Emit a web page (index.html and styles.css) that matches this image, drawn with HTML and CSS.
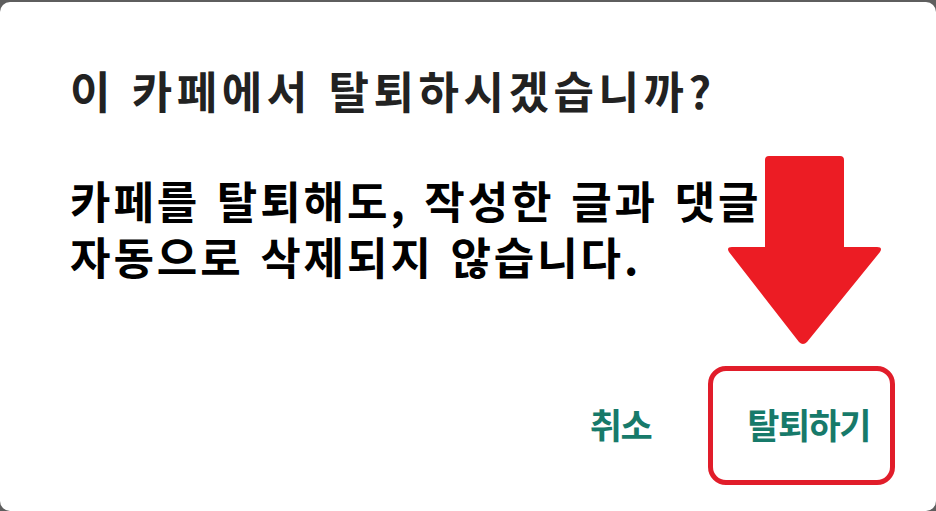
FILE: index.html
```html
<!DOCTYPE html>
<html lang="ko">
<head>
    <meta charset="UTF-8">
    <meta name="viewport" content="width=device-width, initial-scale=1.0">
    <title>카페 탈퇴</title>
    <link rel="stylesheet" href="styles.css">
</head>
<body>
    <div class="dialog">
        <!-- Title -->
        <h1 class="dialog-title">이 카페에서 탈퇴하시겠습니까?</h1>

        <!-- Message -->
        <p class="dialog-message">카페를 탈퇴해도, 작성한 글과 댓글<span class="msg-tail">은</span><br>자동으로 삭제되지 않습니다.</p>

        <!-- Actions -->
        <div class="dialog-actions">
            <button class="action-btn">취소</button>
            <button class="action-btn confirm">탈퇴하기</button>
        </div>

        <!-- Highlight marks -->
        <svg class="mark-arrow" width="160" height="190" viewBox="0 0 160 190">
            <path d="M40 4 Q40 0 44 0 L115 0 Q119 0 119 4 L119 91 L152 91 Q158 91 155 96 L82 186 Q78 190 74 186 L4 96 Q1 91 7 91 L40 91 Z" fill="#ec1c24"/>
        </svg>
        <div class="mark-box"></div>
    </div>
</body>
</html>
```

FILE: styles.css
```css
/* Global Reset */
* {
    margin: 0;
    padding: 0;
    box-sizing: border-box;
}

body {
    background-color: #5e5e5e;
    font-family: 'Noto Sans CJK KR', 'Noto Sans', sans-serif;
    overflow: hidden;
}

/* Dialog */
.dialog {
    position: relative;
    margin-top: 2px;
    height: 509px;
    background-color: #fff;
    border-radius: 10px;
    padding: 60px 0 0 70px;
}

.dialog-title {
    font-size: 44px;
    line-height: 56px;
    font-weight: 700;
    letter-spacing: 4.5px;
    color: #222;
}

.dialog-message {
    margin-top: 54px;
    font-size: 44px;
    line-height: 56px;
    font-weight: 700;
    letter-spacing: 2.9px;
    word-spacing: 1.5px;
    color: #000;
}

.msg-tail {
    margin-left: 10px;
}

/* Buttons */
.dialog-actions {
    display: flex;
    justify-content: flex-end;
    gap: 96px;
    margin-top: 120px;
    padding-right: 66px;
}

.action-btn {
    background: none;
    border: none;
    font-family: inherit;
    font-size: 35px;
    font-weight: 700;
    line-height: 40px;
    letter-spacing: -1.5px;
    color: #177a6a;
    cursor: pointer;
}

/* Red arrow and outline on top */
.mark-arrow {
    position: absolute;
    left: 725px;
    top: 154px;
}

.mark-box {
    position: absolute;
    left: 708px;
    top: 364px;
    width: 187px;
    height: 119px;
    border: 5px solid #e11d2a;
    border-radius: 18px;
}
```
